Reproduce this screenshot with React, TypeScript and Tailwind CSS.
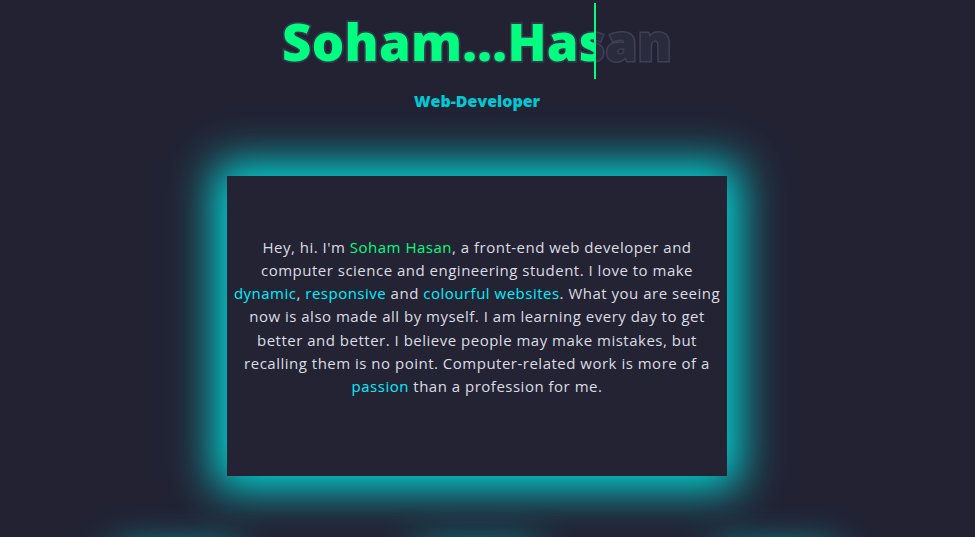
import React from 'react';

const skills = ['HTML', 'CSS', 'JavaScript'];

export default function App() {
  return (
    <div className="min-h-screen bg-[#222233] font-['Open_Sans',sans-serif] overflow-hidden pr-[21px]">
      <header className="flex flex-col items-center">
        <h1 className="relative mt-[3px] h-[76px] text-[51px] leading-[76px] font-extrabold tracking-[0.3px] whitespace-nowrap">
          <span className="text-[#2a2b3d] [-webkit-text-stroke:3px_#3f4056] [paint-order:stroke_fill]">
            Soham...Hasan
          </span>
          <span className="absolute left-0 top-0 h-full w-[314px] overflow-hidden border-r-2 border-[#00ff80] text-[#00ff80] [-webkit-text-stroke:3px_#35364b] [paint-order:stroke_fill]">
            Soham...Has
          </span>
        </h1>
        <h2 className="mt-[10px] text-[16px] font-extrabold text-[#00c9d4]">
          Web-Developer
        </h2>
      </header>

      <main className="flex flex-col items-center">
        <section className="mt-[63px] w-[500px] h-[300px] bg-[#232334] flex items-center justify-center px-[4px] pb-[18px] shadow-[0_0_42px_12px_#00dede]">
          <p className="text-center text-[15px] leading-[23.2px] text-[#dcdce2] tracking-[0.5px]">
            Hey, hi. I'm <span className="text-[#00ff80]">Soham Hasan</span>, a front-end web developer and computer science and engineering student. I love to make{' '}
            <span className="text-[#00f0ff]">dynamic</span>,{' '}
            <span className="text-[#00f0ff]">responsive</span> and{' '}
            <span className="text-[#00f0ff]">colourful websites</span>. What you are seeing now is also made all by myself. I am learning every day to get better and better. I believe people may make mistakes, but recalling them is no point. Computer-related work is more of a{' '}
            <span className="text-[#00f0ff]">passion</span> than a profession for me.
          </p>
        </section>

        <div className="mt-[82px] flex gap-[190px]">
          {skills.map((s) => (
            <div
              key={s}
              className="w-[110px] h-[110px] bg-[#232334] shadow-[0_0_40px_6px_#00c8d0] flex items-center justify-center text-[#00f0ff]"
            >
              {s}
            </div>
          ))}
        </div>
      </main>
    </div>
  );
}
